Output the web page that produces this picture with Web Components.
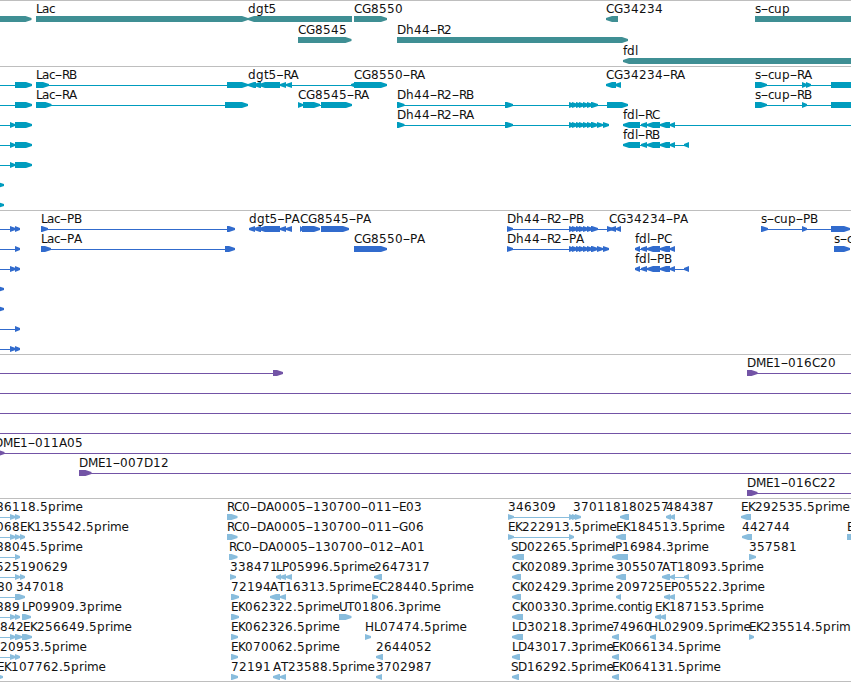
<!DOCTYPE html>
<html lang="en">
<head>
<meta charset="utf-8">
<title>Genome browser</title>
<style>
    body {
        margin: 0;
        background: #fff;
        overflow: hidden;
    }
</style>
</head>
<body>
<genome-view></genome-view>

<script>
// Advance widths in pixels, anything not listed is 8 wide
const ADVANCE = {
    '.': 4, '-': 7,
    A: 8, B: 7, D: 9, E: 7, G: 9, H: 9, I: 3, K: 7, L: 6, M: 10, P: 7, R: 7, S: 7, T: 7,
    a: 7, c: 6, e: 7, f: 4, i: 3, l: 3, m: 11.5, n: 7, o: 7, r: 5, s: 6, t: 4.5
};

const BAR_TOP = 15;
const BAR_BOTTOM = 21;
const HEAD = 6;

// Exons and connectors shared by several transcripts
const DH44 = '569>575 572>578 576>582 579>585 583>589 587>593 591>598';
const DH44_TAIL = '597>603 603>609';
const FDL = '641<647 647<660 660<670 670<675';
const DGT5 = '254<261 259<280 280<286 286<292';

// Glyphs: "a>b" forward exon, "a<b" reverse exon, "a-b" connector
const tracks = [
    {
        color: '#3f8f94', rowHeight: 21, pad: 2,
        rows: [
            { labels: { 36: 'Lac', 248: 'dgt5', 354: 'CG8550', 606: 'CG34234', 755: 's-cup' },
              glyphs: '-9>31.5 36>248 248<352 354>387 606<618 755>870' },
            { labels: { 298: 'CG8545', 397: 'Dh44-R2' }, glyphs: '298>351.5 397>628' },
            { labels: { 623: 'fdl' }, glyphs: '623<870' }
        ]
    },
    {
        color: '#009cbe', rowHeight: 20, pad: 3,
        rows: [
            { labels: { 36: 'Lac-RB', 248: 'dgt5-RA', 354: 'CG8550-RA', 606: 'CG34234-RA', 755: 's-cup-RA' },
              glyphs: `0-16 15>32 36-230 36>49 227>248 248-354 248<256 ${DGT5} 351<357 354>387 606<616 615<621 755-851 755>767 802>807 806>811 831>870` },
            { labels: { 36: 'Lac-RA', 298: 'CG8545-RA', 397: 'Dh44-R2-RB', 755: 's-cup-RB' },
              glyphs: `0-16 15>32 36-230 36>51.5 225>248 298-322 298>303 303>320 321>352 397-610 397>404.5 505>513 ${DH44} 607>628 755-851 755>767 802>807 831>870` },
            { labels: { 397: 'Dh44-R2-RA', 623: 'fdl-RC' },
              glyphs: `0-16 10>15 15>32 397-605 397>404.5 505>513 ${DH44} ${DH44_TAIL} 630-851 623<640 ${FDL}` },
            { labels: { 623: 'fdl-RB' }, glyphs: `0-16 10>15 15>32 630-686 623<640 ${FDL} 684<689` },
            { glyphs: '0-16 10>15 15>32' },
            { glyphs: '-3>4' },
            { glyphs: '-3>4' }
        ]
    },
    {
        color: '#316bcd', rowHeight: 20, pad: 3,
        rows: [
            { labels: { 41: 'Lac-PB', 249: 'dgt5-PA', 300: 'CG8545-PA', 507: 'Dh44-R2-PB', 609: 'CG34234-PA', 761: 's-cup-PB' },
              glyphs: `0-16 10>15.5 15>20 41-230 41>48 227>235 252-290 249<255 ${DGT5} 300>303 302>320 321>349 507-610 507>513 ${DH44} 607>613 610<616 616<621 761-835 761>768 802>807 831>850` },
            { labels: { 41: 'Lac-PA', 354: 'CG8550-PA', 507: 'Dh44-R2-PA', 635: 'fdl-PC', 834: 's-c' },
              glyphs: `0-16 15>20 41-230 41>51 225>235 354>387 507-605 507>513 ${DH44} ${DH44_TAIL} 638-672 635<640 ${FDL} 834>850` },
            { labels: { 635: 'fdl-PB' }, glyphs: `0-16 10>15.5 15>20 638-686 635<640 ${FDL} 684<689` },
            { glyphs: '-3>4' },
            { glyphs: '-3>4' },
            { glyphs: '0-16 15>20' },
            { glyphs: '0-16 10>15.5 15>20' }
        ]
    },
    {
        color: '#7354a6', rowHeight: 20, pad: 3,
        rows: [
            { labels: { 747: 'DME1-016C20' }, glyphs: '0-280 273>283 747-851 747>757.5' },
            { glyphs: '0-851' },
            { glyphs: '0-851' },
            { glyphs: '0-851' },
            { labels: { '-6': 'DME1-011A05' }, glyphs: '0-851 -3>4.5' },
            { labels: { 79: 'DME1-007D12' }, glyphs: '79-851 79>91.5' },
            { labels: { 747: 'DME1-016C22' }, glyphs: '747-851 747>757.5' }
        ]
    },
    {
        color: '#89bddd', rowHeight: 20, pad: 2,
        rows: [
            { labels: { '-4': '86118.5prime', 227: 'RC0-DA0005-130700-011-E03', 508: '346309', 573: '370118', 621: '180257', 666: '484387', 741: 'EK292535.5prime' },
              glyphs: '0-16 10>15.5 15>20 227>237.5 508-572 508>514 569>575 572>578 575>581 620<629 666<671 670<675 741<751' },
            { labels: { '-4': '068', 20: 'EK135542.5prime', 227: 'RC0-DA0005-130700-011-G06', 508: 'EK222913.5prime', 616: 'EK184513.5prime', 742: '442744', 847: 'E' },
              glyphs: '0-16 10>15.5 15>20 20>25 227>237.5 508-572 508>514 569>574 616<626 742<752 847>857' },
            { labels: { '-4': '88045.5prime', 229: 'RC0-DA0005-130700-012-A01', 511: 'SD02265.5prime', 612: 'IP16984.3prime', 749: '357581' },
              glyphs: '0-16 15>20 229>237.5 512<524 612<628 749>756' },
            { labels: { '-4': '525', 20: '190629', 230: '338471', 276: 'LP05996.5prime', 374: '2647317', 512: 'CK02089.3prime', 616: '305507', 662: 'AT18093.5prime' },
              glyphs: '0-16 15>20 20>25 230>236 276<281 280<286 286<292 374<382 512<521 616<626 672-686 662<670 670<675 684<689' },
            { labels: { '-3': '80', 16: '347018', 231: '72194', 270: 'AT16313.5prime', 372: 'EC28440.5prime', 512: 'CK02429.3prime', 616: '209725', 664: 'EP05522.3prime' },
              glyphs: '0-16 15>25 231>239 270<280 280<286 372>378 512<521 616<621 664<670 669<675' },
            { labels: { '-4': '889', 22: 'LP09909.3prime', 231: 'EK062322.5prime', 339: 'UT01806.3prime', 512: 'CK00330.3prime.contig', 655: 'EK187153.5prime' },
              glyphs: '0-16 10>15.5 15>20 22>31 231>239 339>351.5 512<523 655<661 660<666' },
            { labels: { 0: '842', 23: 'EK256649.5prime', 231: 'EK062326.5prime', 365: 'HL07474.5prime', 512: 'LD30218.3prime', 612: '74960', 649: 'HL02909.5prime', 749: 'EK235514.5prim' },
              glyphs: '0-16 10>15.5 15>22 22>32 231>238 365>371 512<523 612<619 650<656 749>754' },
            { labels: { 0: '20953.5prime', 231: 'EK070062.5prime', 376: '2644052', 512: 'LD43017.3prime', 612: 'EK066134.5prime' },
              glyphs: '0-16 10>15.5 15>20 231>238 376<383 512<520 612<619' },
            { labels: { '-3': 'EK107762.5prime', 231: '72191', 273: 'AT23588.5prime', 376: '3702987', 511: 'SD16292.5prime', 612: 'EK064131.5prime' },
              glyphs: '-3>3 231>238 273<280 280<286 376<382 512<519 612<619' }
        ]
    }
];

function drawGlyph(glyph) {
    const [, start, type, stop] = glyph.match(/^(-?[\d.]+)([<>-])([\d.]+)$/);
    const a = Number(start);
    const b = Number(stop);
    if (type === '-') {
        return `<rect x="${a}" y="18" width="${b - a}" height="1"/>`;
    }
    const head = Math.min(HEAD, b - a);
    const base = type === '>' ? a : b;
    const neck = type === '>' ? b - head : a + head;
    const tip = type === '>' ? b : a;
    return `<polygon points="${base},${BAR_TOP} ${neck},${BAR_TOP} ${tip},17 ${tip},19 ${neck},${BAR_BOTTOM} ${base},${BAR_BOTTOM}"/>`;
}

function drawLabel(x, text) {
    let pos = Number(x);
    // split on hyphens, which are stretched to fill their advance
    const parts = text.split(/(-)/).map(part => {
        const xs = [...part].map(ch => {
            const at = pos;
            pos += ADVANCE[ch] || 8;
            return at;
        });
        return part === '-'
            ? `<tspan x="${xs[0] - 0.5}" textLength="8" lengthAdjust="spacingAndGlyphs">-</tspan>`
            : `<tspan x="${xs.join(' ')}">${part}</tspan>`;
    });
    return `<text y="12">${parts.join('')}</text>`;
}

class TrackRow extends HTMLElement {
    constructor() {
        super();
        this.attachShadow({ mode: 'open' });
    }

    set data(row) {
        const labels = Object.entries(row.labels || {});
        this.shadowRoot.innerHTML = `
            <style>
                :host {
                    display: block;
                    height: var(--row-height);
                }
                svg {
                    display: block;
                    width: 100%;
                    height: 100%;
                    overflow: visible;
                    fill: var(--track-color);
                }
                text {
                    font: 12px "DejaVu Sans", sans-serif;
                    fill: #111;
                }
            </style>
            <svg>
                ${row.glyphs.split(' ').map(drawGlyph).join('')}
                ${labels.map(([x, text]) => drawLabel(x, text)).join('')}
            </svg>
        `;
    }
}

customElements.define('track-row', TrackRow);

class GenomeTrack extends HTMLElement {
    constructor() {
        super();
        this.attachShadow({ mode: 'open' });
        this.shadowRoot.innerHTML = `
            <style>
                :host {
                    display: block;
                    border-top: 1px solid #bebebe;
                }
            </style>
            <slot></slot>
        `;
    }
}

customElements.define('genome-track', GenomeTrack);

class GenomeView extends HTMLElement {
    constructor() {
        super();
        this.attachShadow({ mode: 'open' });
        this.shadowRoot.innerHTML = `
            <style>
                :host {
                    display: flex;
                    flex-direction: column;
                    width: 851px;
                    overflow: hidden;
                    border-bottom: 1px solid #bebebe;
                }
            </style>
        `;
    }

    connectedCallback() {
        tracks.forEach(track => {
            const el = document.createElement('genome-track');
            el.style.setProperty('--track-color', track.color);
            el.style.setProperty('--row-height', `${track.rowHeight}px`);
            el.style.paddingBottom = `${track.pad}px`;
            track.rows.forEach(row => {
                const rowEl = document.createElement('track-row');
                rowEl.data = row;
                el.appendChild(rowEl);
            });
            this.shadowRoot.appendChild(el);
        });
    }
}

customElements.define('genome-view', GenomeView);
</script>
</body>
</html>
